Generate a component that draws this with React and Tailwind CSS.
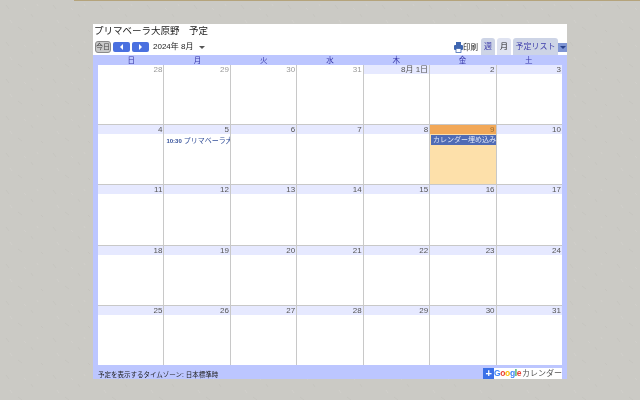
const days = ["日", "月", "火", "水", "木", "金", "土"];
const weeks = [
  ["28", "29", "30", "31", "8月 1日", "2", "3"],
  ["4", "5", "6", "7", "8", "9", "10"],
  ["11", "12", "13", "14", "15", "16", "17"],
  ["18", "19", "20", "21", "22", "23", "24"],
  ["25", "26", "27", "28", "29", "30", "31"],
];
const font = { fontFamily: '"Liberation Sans","Noto Sans CJK JP",sans-serif' };

function Cell({ label, dim, today, event, time, first }) {
  return (
    <div className={`flex-1 min-w-0 flex flex-col ${first ? "" : "border-l border-[#c8c8c8]"} ${today ? "bg-[#fde0aa]" : ""}`}>
      <div className={`h-[9px] leading-[9px] text-[8px] text-right pr-[1px] ${today ? "bg-[#f2a858] text-[#9a7136]" : dim ? "text-[#999]" : "bg-[#e6e9ff] text-[#555]"}`}>
        {label}
      </div>
      {event && (
        <div className="mt-[1px] ml-[1px] h-[10px] bg-[#4f6bb5] text-[#dfe5f5] text-[7px] leading-[10px] pl-[2px] overflow-hidden whitespace-nowrap">
          カレンダー埋め込み
        </div>
      )}
      {time && (
        <div className="mt-[1px] ml-[2px] h-[11px] text-[7px] leading-[11px] text-[#34509a] overflow-hidden whitespace-nowrap">
          <span className="font-bold text-[6px] mr-[2px]">10:30</span>プリマベーラ大
        </div>
      )}
    </div>
  );
}

function Texture() {
  return (
    <svg className="absolute inset-0" width="640" height="400">
      <defs>
        <pattern id="paper" width="47" height="37" patternUnits="userSpaceOnUse">
          <path d="M6 5l3 4M31 14l2 3M18 27l4 3M41 30l2 2" stroke="#c0bfb9" strokeWidth="0.5" fill="none" />
          <path d="M24 8l2 2M10 20l2 3M37 4l1 2" stroke="#d4d3ce" strokeWidth="0.5" fill="none" />
        </pattern>
      </defs>
      <rect width="640" height="400" fill="url(#paper)" />
      <rect x="74" width="566" height="1" fill="#b5a47c" />
    </svg>
  );
}

export default function App() {
  return (
    <div className="relative w-[640px] h-[400px] bg-[#cbcac5] overflow-hidden" style={font}>
      <Texture />
      <div className="relative blur-[0.25px] ml-[93px] pt-[24px] w-[474px]">
        <div className="w-[474px] h-[355px] bg-white flex flex-col">
          <div className="h-[14px] leading-[13px] text-[9.5px] text-[#222] whitespace-nowrap pl-[1px]">プリマベーラ大原野　予定</div>
          <div className="h-[17px] flex items-center">
            <div className="ml-[2px] w-[16px] h-[12px] rounded-[3px] bg-[#c8c8c8] border border-[#8a8a8a] text-[7px] leading-[10px] text-center text-[#444]">今日</div>
            <div className="ml-[2px] w-[17px] h-[10px] rounded-[2px] bg-[#4a70e0] flex items-center justify-center"><span className="w-0 h-0 border-y-[3px] border-y-transparent border-r-[3px] border-r-white" /></div>
            <div className="ml-[2px] w-[17px] h-[10px] rounded-[2px] bg-[#4a70e0] flex items-center justify-center"><span className="w-0 h-0 border-y-[3px] border-y-transparent border-l-[3px] border-l-white" /></div>
            <div className="ml-[4px] text-[8px] text-[#222] whitespace-nowrap">2024年 8月</div>
            <span className="ml-[6px] mt-[2px] w-0 h-0 border-x-[3px] border-x-transparent border-t-[3px] border-t-[#555]" />
            <div className="ml-auto flex items-end h-full">
              <svg width="9" height="11" viewBox="0 0 9 11" className="mb-[2px]"><rect x="2" y="0" width="5" height="3" fill="#3f66b0" /><rect x="0" y="3" width="9" height="5" rx="1" fill="#3f66b0" /><rect x="2" y="6.5" width="5" height="4" fill="#fff" stroke="#3f66b0" strokeWidth="0.8" /></svg>
              <span className="text-[7.5px] leading-[11px] mb-[2px] text-[#222]">印刷</span>
              <div className="ml-[3px] w-[14px] h-[17px] rounded-t-[3px] bg-[#cdd4e6] text-[8px] leading-[17px] text-center text-[#3d3daa]">週</div>
              <div className="ml-[2px] w-[14px] h-[17px] rounded-t-[3px] bg-[#dfe3f1] text-[8px] leading-[17px] text-center text-[#222]">月</div>
              <div className="ml-[2px] w-[45px] h-[17px] rounded-t-[3px] bg-[#cdd4e6] text-[8px] leading-[17px] text-center text-[#3d3daa] whitespace-nowrap">予定リスト</div>
              <div className="mb-[3px] w-[9px] h-[9px] bg-[#7f95d4] flex items-center justify-center"><span className="w-0 h-0 border-x-[3px] border-x-transparent border-t-[3px] border-t-[#27408b]" /></div>
            </div>
          </div>
          <div className="flex-1 bg-[#bcc6ff] flex flex-col min-h-0 px-[5px]">
            <div className="h-[10px] flex">
              {days.map((d) => (
                <div key={d} className="flex-1 text-center text-[7.5px] leading-[11px] text-[#3535a8]">{d}</div>
              ))}
            </div>
            <div className="h-[300px] flex flex-col bg-white">
              {weeks.map((w, i) => (
                <div key={i} className={`flex flex-1 min-h-0 ${i ? "border-t border-[#c8c8c8]" : ""}`}>
                  {w.map((d, j) => (
                    <Cell
                      key={j}
                      label={d}
                      first={j === 0}
                      dim={i === 0 && j < 4}
                      today={i === 1 && j === 5}
                      event={i === 1 && j === 5}
                      time={i === 1 && j === 1}
                    />
                  ))}
                </div>
              ))}
            </div>
            <div className="h-[14px] flex items-end justify-between">
              <span className="text-[6.5px] leading-[9px] text-[#222] whitespace-nowrap">予定を表示するタイムゾーン: 日本標準時</span>
              <div className="flex items-center">
                <div className="w-[11px] h-[11px] bg-[#3b70e8] text-white text-[11px] leading-[10px] text-center font-bold">+</div>
                <div className="h-[11px] bg-white flex items-center text-[8px] leading-[11px] whitespace-nowrap">
                  <span className="text-[8.5px] font-bold tracking-[-0.4px] mr-[1px]"><span className="text-[#4285f4]">G</span><span className="text-[#ea4335]">o</span><span className="text-[#fbbc05]">o</span><span className="text-[#4285f4]">g</span><span className="text-[#34a853]">l</span><span className="text-[#ea4335]">e</span></span>
                  <span className="text-[#555]">カレンダー</span>
                </div>
              </div>
            </div>
          </div>
        </div>
      </div>
    </div>
  );
}
